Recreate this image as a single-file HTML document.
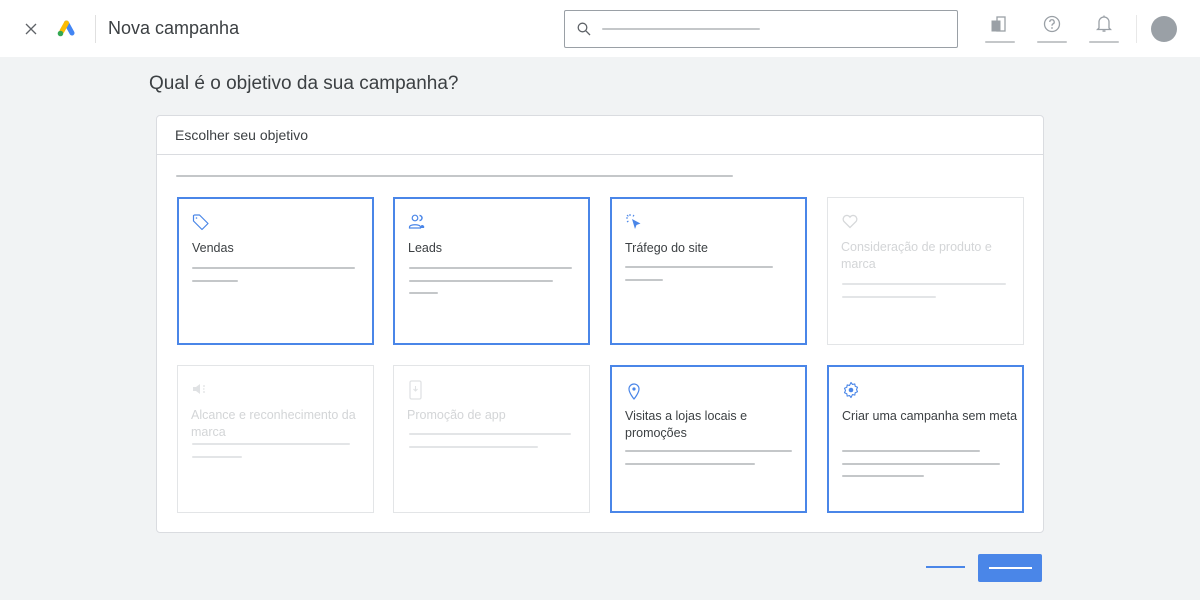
<!DOCTYPE html>
<html><head><meta charset="utf-8"><style>
*{margin:0;padding:0;box-sizing:border-box}
body{width:1200px;height:600px;background:#f1f3f4;font-family:"Liberation Sans",Arial,sans-serif;position:relative;overflow:hidden;color:#202124}
.a{position:absolute}
.top{left:0;top:0;width:1200px;height:57px;background:#fff}
.line{position:absolute;height:2px;background:#c4c7c9;border-radius:1px}
.card{position:absolute;width:197px;height:148px;background:#fff;border:2px solid #4a86e8}
.card.d{border:1px solid #e3e5e7}
.card .t{position:absolute;left:13px;top:41px;font-size:12.5px;line-height:17px;color:#3c4043;width:180px}
.card.d .t{color:#d3d5d7}
.card svg{position:absolute;left:13px;top:14px}
.card.d .line{background:#e3e5e7}
</style></head><body>
<div class="a top"></div>
<svg class="a" style="left:25px;top:23px" width="12" height="12" viewBox="0 0 12 12"><path d="M1 1L11 11M11 1L1 11" stroke="#5f6368" stroke-width="1.3"/></svg>
<svg class="a" style="left:57px;top:20px" width="19" height="17" viewBox="0 0 19 17"><path d="M9.5 3L15 13" stroke="#4285f4" stroke-width="5" stroke-linecap="round"/><path d="M9.5 3L5 11" stroke="#fbbc04" stroke-width="5" stroke-linecap="round"/><circle cx="3.5" cy="13.5" r="2.8" fill="#34a853"/></svg>
<div class="a" style="left:95px;top:15px;width:1px;height:28px;background:#e0e0e0"></div>
<div class="a" style="left:108px;top:18px;font-size:18px;color:#3c4043">Nova campanha</div>
<div class="a" style="left:564px;top:10px;width:394px;height:38px;border:1px solid #9aa0a6;border-radius:2px;background:#fff"></div>
<svg class="a" style="left:577px;top:22px" width="14" height="14" viewBox="0 0 14 14"><circle cx="5.5" cy="5.5" r="4.3" fill="none" stroke="#5f6368" stroke-width="1.3"/><path d="M8.7 8.7L13 13" stroke="#5f6368" stroke-width="1.3"/></svg>
<div class="line" style="left:602px;top:28px;width:158px"></div>
<svg class="a" style="left:990px;top:15px" width="18" height="18" viewBox="0 0 18 18"><rect x="2" y="6" width="8" height="10" fill="#9aa0a6" stroke="#9aa0a6"/><rect x="7" y="2" width="8" height="14" fill="none" stroke="#9aa0a6" stroke-width="1.3"/></svg>
<div class="line" style="left:985px;top:41px;width:30px"></div>
<svg class="a" style="left:1043px;top:15px" width="18" height="18" viewBox="0 0 18 18"><circle cx="9" cy="9" r="7.5" fill="none" stroke="#9aa0a6" stroke-width="1.3"/><path d="M6.8 7a2.2 2.2 0 1 1 3 2c-.8.4-.8 1-.8 1.8" fill="none" stroke="#9aa0a6" stroke-width="1.3"/><circle cx="9" cy="13" r=".9" fill="#9aa0a6"/></svg>
<div class="line" style="left:1037px;top:41px;width:30px"></div>
<svg class="a" style="left:1096px;top:14px" width="16" height="19" viewBox="0 0 16 19"><path d="M3 14V8a5 5 0 0 1 10 0v6l1.5 1.5h-13z" fill="none" stroke="#9aa0a6" stroke-width="1.3"/><path d="M6.5 17h3" stroke="#9aa0a6" stroke-width="1.5"/><path d="M8 1.5v1.5" stroke="#9aa0a6" stroke-width="1.3"/></svg>
<div class="line" style="left:1089px;top:41px;width:30px"></div>
<div class="a" style="left:1136px;top:15px;width:1px;height:28px;background:#e8e8e8"></div>
<div class="a" style="left:1151px;top:16px;width:26px;height:26px;border-radius:50%;background:#9aa0a6"></div>

<div class="a" style="left:149px;top:73px;font-size:19px;color:#3c4043">Qual é o objetivo da sua campanha?</div>
<div class="a" style="left:156px;top:115px;width:888px;height:418px;background:#fff;border:1px solid #dadce0;border-radius:4px"></div>
<div class="a" style="left:157px;top:154px;width:886px;height:1px;background:#dadce0"></div>
<div class="a" style="left:175px;top:127px;font-size:14px;color:#3c4043">Escolher seu objetivo</div>
<div class="line" style="left:176px;top:175px;width:557px"></div>

<div class="card" style="left:177px;top:197px">
<svg width="18" height="18" viewBox="0 0 18 18"><path d="M1.5 2.5v5.5l8.5 8.5 6-6-8.5-8.5H2.5z" fill="none" stroke="#4a86e8" stroke-width="1.2" stroke-linejoin="round"/><circle cx="4.5" cy="5" r=".8" fill="#4a86e8"/></svg>
<div class="t">Vendas</div><div class="line" style="left:13px;top:68px;width:163px"></div><div class="line" style="left:13px;top:81px;width:46px"></div></div>
<div class="card" style="left:393px;top:197px">
<svg width="20" height="18" viewBox="0 0 20 18"><circle cx="7" cy="5" r="2.8" fill="none" stroke="#4a86e8" stroke-width="1.2"/><path d="M1.5 14c0-3 11-3 11 0v1h-11z" fill="none" stroke="#4a86e8" stroke-width="1.2"/><path d="M11.5 2.5a2.5 2.5 0 0 1 0 5" fill="none" stroke="#4a86e8" stroke-width="1.5"/><path d="M13 12.5a2 2 0 0 1 3 2.5h-3z" fill="#4a86e8"/></svg>
<div class="t">Leads</div><div class="line" style="left:14px;top:68px;width:163px"></div><div class="line" style="left:14px;top:81px;width:144px"></div><div class="line" style="left:14px;top:93px;width:29px"></div></div>
<div class="card" style="left:610px;top:197px">
<svg width="18" height="18" viewBox="0 0 18 18"><path d="M7 6l3 10 1.5-4 4-1.5z" fill="#4a86e8"/><path d="M5 1v2M1 5h2M2 2l1.4 1.4M9 2l-1 1.4M2 9l1.4-1" stroke="#4a86e8" stroke-width="1.1"/></svg>
<div class="t">Tráfego do site</div><div class="line" style="left:13px;top:67px;width:148px"></div><div class="line" style="left:13px;top:80px;width:38px"></div></div>
<div class="card d" style="left:827px;top:197px">
<svg width="18" height="18" viewBox="0 0 18 18"><path d="M9 15.5L2.8 9.3a3.6 3.6 0 0 1 6.2-4.2 3.6 3.6 0 0 1 6.2 4.2z" fill="none" stroke="#d6d8da" stroke-width="1.3"/></svg>
<div class="t">Consideração de produto e marca</div><div class="line" style="left:14px;top:85px;width:164px"></div><div class="line" style="left:14px;top:98px;width:94px"></div></div>

<div class="card d" style="left:177px;top:365px">
<svg width="18" height="18" viewBox="0 0 18 18"><path d="M2 7h3l4-3v10l-4-3H2z" fill="#e0e2e4"/><path d="M12 6h2M12 12h2M12 9h1.5" stroke="#e0e2e4" stroke-width="1.2"/></svg>
<div class="t">Alcance e reconhecimento da marca</div><div class="line" style="left:14px;top:77px;width:158px"></div><div class="line" style="left:14px;top:90px;width:50px"></div></div>
<div class="card d" style="left:393px;top:365px">
<svg width="18" height="20" viewBox="0 0 18 20"><rect x="3" y="1" width="11" height="18" rx="1.5" fill="none" stroke="#e0e2e4" stroke-width="1.3"/><path d="M8.5 6v5M6.5 9l2 2 2-2" stroke="#e0e2e4" stroke-width="1.1" fill="none"/></svg>
<div class="t">Promoção de app</div><div class="line" style="left:15px;top:67px;width:162px"></div><div class="line" style="left:15px;top:80px;width:129px"></div></div>
<div class="card" style="left:610px;top:365px">
<svg width="18" height="20" viewBox="0 0 18 20"><path d="M9 18s-5-6-5-10a5 5 0 0 1 10 0c0 4-5 10-5 10z" fill="none" stroke="#4a86e8" stroke-width="1.2"/><circle cx="9" cy="8" r="1.6" fill="#4a86e8"/></svg>
<div class="t">Visitas a lojas locais e promoções</div><div class="line" style="left:13px;top:83px;width:167px"></div><div class="line" style="left:13px;top:96px;width:130px"></div></div>
<div class="card" style="left:827px;top:365px">
<svg width="18" height="18" viewBox="0 0 18 18"><path d="M9 1.5l1.5 2 2.3-.6.4 2.4 2.3 1-1 2.2 1 2.2-2.3 1-.4 2.4-2.3-.6L9 16.5l-1.5-2-2.3.6-.4-2.4-2.3-1 1-2.2-1-2.2 2.3-1 .4-2.4 2.3.6z" fill="none" stroke="#4a86e8" stroke-width="1.1" stroke-linejoin="round"/><circle cx="9" cy="9" r="2.3" fill="#4a86e8"/></svg>
<div class="t">Criar uma campanha sem meta</div><div class="line" style="left:13px;top:83px;width:138px"></div><div class="line" style="left:13px;top:96px;width:158px"></div><div class="line" style="left:13px;top:108px;width:82px"></div></div>

<div class="a" style="left:926px;top:566px;width:39px;height:2px;background:#4a86e8"></div>
<div class="a" style="left:978px;top:554px;width:64px;height:28px;background:#4a86e8;border-radius:2px"></div>
<div class="a" style="left:989px;top:567px;width:43px;height:2px;background:#fff"></div>
</body></html>
